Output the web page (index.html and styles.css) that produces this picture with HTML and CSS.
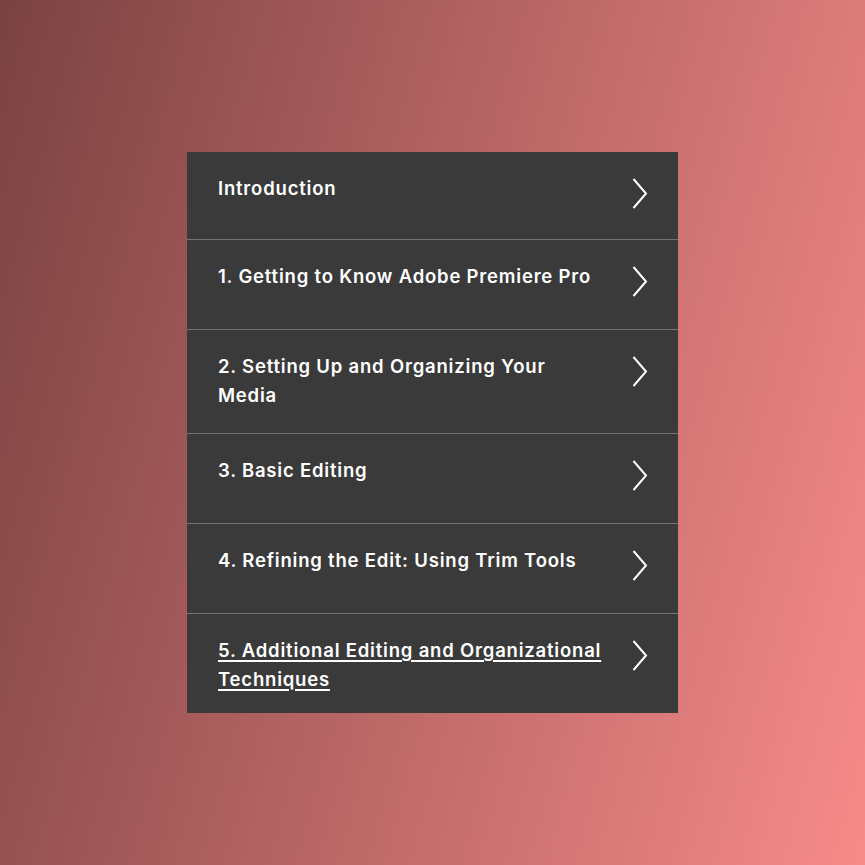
FILE: index.html
```html
<!DOCTYPE html>
<html lang="en">
<head>
    <meta charset="UTF-8">
    <meta name="viewport" content="width=device-width, initial-scale=1.0">
    <title>Adobe Premiere Pro - Lessons</title>
    <link rel="stylesheet" href="styles.css">
</head>
<body>
    <div class="page">
        <nav class="lessons">
            <a class="lesson" href="#">
                <span class="lesson-title">Introduction</span>
                <svg class="chevron" viewBox="0 0 16 31"><polyline points="1.5,1 14,15.5 1.5,30"/></svg>
            </a>
            <a class="lesson" href="#">
                <span class="lesson-title">1. Getting to Know Adobe Premiere Pro</span>
                <svg class="chevron" viewBox="0 0 16 31"><polyline points="1.5,1 14,15.5 1.5,30"/></svg>
            </a>
            <a class="lesson" href="#">
                <span class="lesson-title">2. Setting Up and Organizing Your Media</span>
                <svg class="chevron" viewBox="0 0 16 31"><polyline points="1.5,1 14,15.5 1.5,30"/></svg>
            </a>
            <a class="lesson" href="#">
                <span class="lesson-title">3. Basic Editing</span>
                <svg class="chevron" viewBox="0 0 16 31"><polyline points="1.5,1 14,15.5 1.5,30"/></svg>
            </a>
            <a class="lesson" href="#">
                <span class="lesson-title">4. Refining the Edit: Using Trim Tools</span>
                <svg class="chevron" viewBox="0 0 16 31"><polyline points="1.5,1 14,15.5 1.5,30"/></svg>
            </a>
            <a class="lesson active" href="#">
                <span class="lesson-title">5. Additional Editing and Organizational Techniques</span>
                <svg class="chevron" viewBox="0 0 16 31"><polyline points="1.5,1 14,15.5 1.5,30"/></svg>
            </a>
        </nav>
    </div>
</body>
</html>
```

FILE: styles.css
```css
html, body {
    margin: 0;
    padding: 0;
    height: 100%;
}
body {
    font-family: Inter, "Noto Sans", Arial, sans-serif;
    background: linear-gradient(105deg, #7b4242 0%, #f78b89 100%);
}
.page {
    padding-top: 152px;
    display: flex;
    justify-content: center;
}
.lessons {
    width: 491px;
    height: 561px;
    overflow: hidden;
    background-color: #3a3a3a;
    display: flex;
    flex-direction: column;
}
.lesson {
    display: flex;
    flex-shrink: 0;
    align-items: flex-start;
    min-height: 90px;
    box-sizing: border-box;
    padding: 22px 30px 23px 31px;
    border-top: 1px solid #737373;
    color: #fff;
    text-decoration: none;
}
.lesson:first-child {
    border-top: none;
    min-height: 87px;
}
.lesson-title {
    flex: 1;
    padding-right: 28px;
    font-size: 18.5px;
    font-weight: 600;
    line-height: 29px;
    letter-spacing: 0.8px;
}
.active .lesson-title {
    text-decoration: underline;
    text-underline-offset: 3px;
    text-decoration-thickness: 1.5px;
}
.chevron {
    width: 16px;
    height: 31px;
    margin-top: 4px;
    flex-shrink: 0;
}
.chevron polyline {
    fill: none;
    stroke: #fff;
    stroke-width: 2;
}
```
